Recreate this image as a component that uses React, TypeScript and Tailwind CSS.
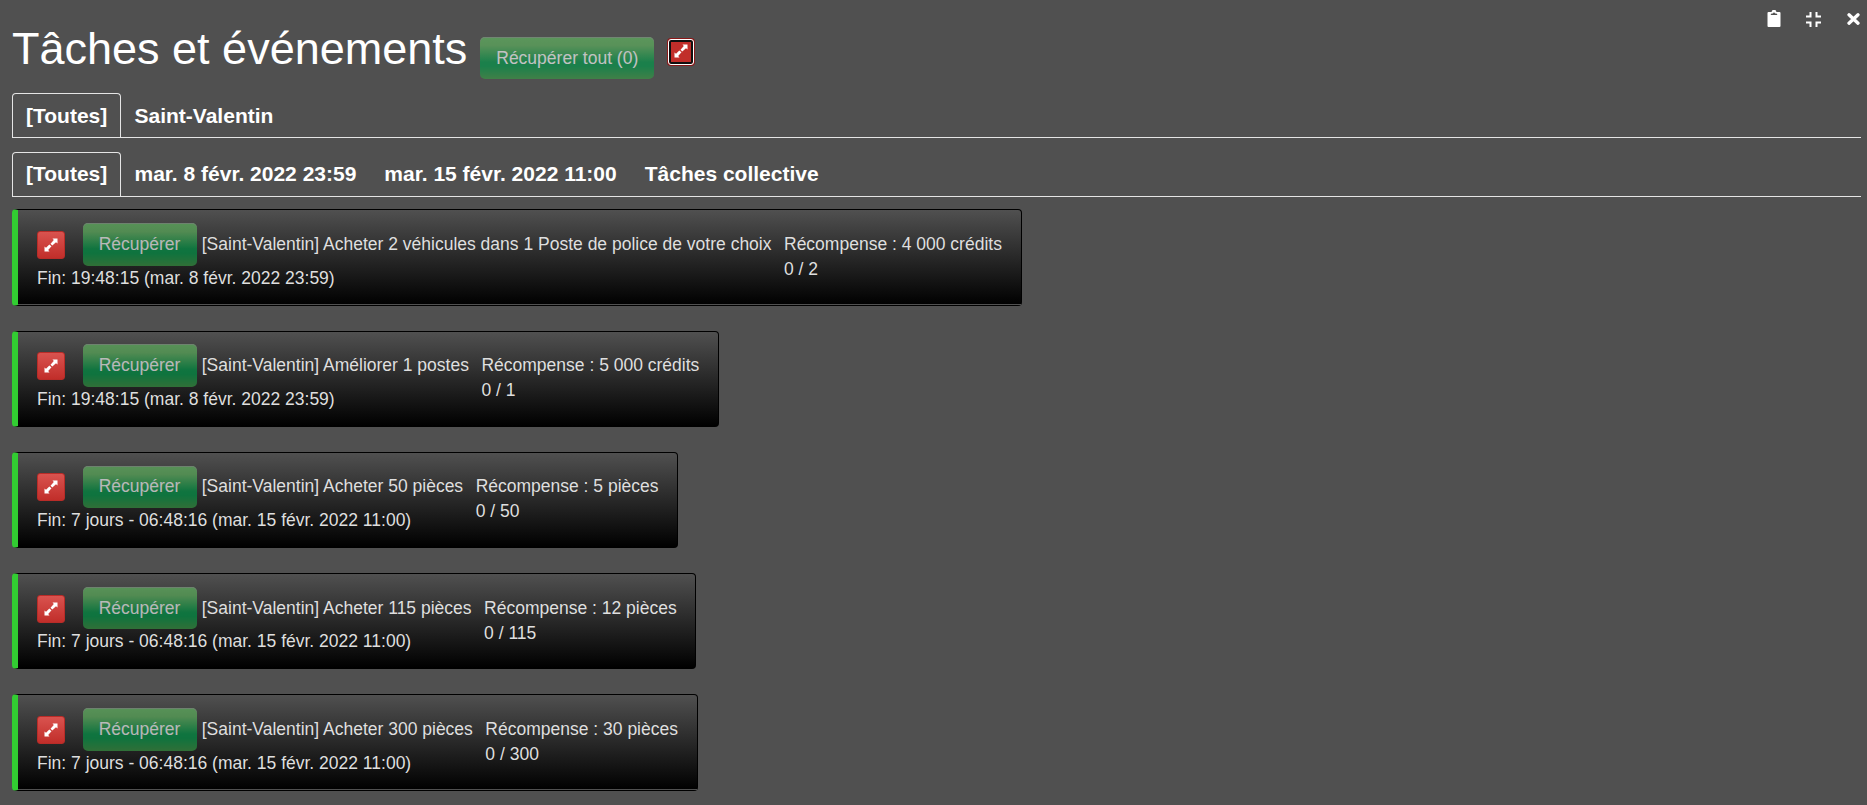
import React from "react";

type Task = { text: string; reward: string; progress: string; end: string; seam?: boolean };

const tasks: Task[] = [
  { text: "[Saint-Valentin] Acheter 2 véhicules dans 1 Poste de police de votre choix", reward: "Récompense : 4 000 crédits", progress: "0 / 2", end: "Fin: 19:48:15 (mar. 8 févr. 2022 23:59)", seam: true },
  { text: "[Saint-Valentin] Améliorer 1 postes", reward: "Récompense : 5 000 crédits", progress: "0 / 1", end: "Fin: 19:48:15 (mar. 8 févr. 2022 23:59)" },
  { text: "[Saint-Valentin] Acheter 50 pièces", reward: "Récompense : 5 pièces", progress: "0 / 50", end: "Fin: 7 jours - 06:48:16 (mar. 15 févr. 2022 11:00)" },
  { text: "[Saint-Valentin] Acheter 115 pièces", reward: "Récompense : 12 pièces", progress: "0 / 115", end: "Fin: 7 jours - 06:48:16 (mar. 15 févr. 2022 11:00)" },
  { text: "[Saint-Valentin] Acheter 300 pièces", reward: "Récompense : 30 pièces", progress: "0 / 300", end: "Fin: 7 jours - 06:48:16 (mar. 15 févr. 2022 11:00)", seam: true },
];

function ResizeIcon({ className = "" }: { className?: string }) {
  return (
    <svg className={className} width="14" height="14" viewBox="0 0 14 14" fill="#fff" aria-hidden="true">
      <path d="M8.500 0.500H13.500V5.500L12 4.200L8.300 7.500L6.500 5.700L9.800 2Z" />
      <path d="M0.500 8.500L2 9.800L5.300 6.500L7.500 8.300L4.200 12L5.500 13.500H0.500Z" />
      <path d="M5.600 5.600L8.400 8.400" stroke="#ce4340" strokeWidth="0.800" />
    </svg>
  );
}

function Tabs({ items, raised = false }: { items: string[]; raised?: boolean }) {
  const top = raised ? "pt-[8px]" : "pt-[9px]";
  return (
    <nav className="flex h-[45px] border-b border-[#e5e5e5] text-[21px] leading-[25px] font-bold text-white">
      {items.map((t, i) => (
        <a
          key={t}
          className={
            i === 0
              ? `h-[45px] w-[109px] rounded-t-[4px] border border-b-0 border-[#e5e5e5] pl-[13px] ${top}`
              : `border border-transparent pr-[13.500px] pl-[12.500px] whitespace-nowrap ${top}`
          }
        >
          {t}
        </a>
      ))}
    </nav>
  );
}

function TaskCard({ task }: { task: Task }) {
  return (
    <section className="relative flex h-[96.25px] w-fit rounded-[4px] border border-l-[6px] border-black border-l-[#32cd32] bg-[linear-gradient(#505050,#000)] pr-[18.75px] pl-[19px] text-[17.5px] leading-[25px] text-[#dfdfdf]">
      <div className="pt-[12.75px]">
        <div className="flex h-[42.5px] items-center">
          <button className="mt-[1px] mr-[18px] flex h-7 w-7 items-center justify-center rounded-[3px] border border-[#b92c28] bg-[linear-gradient(#d9534f,#c12e2a)]">
            <ResizeIcon />
          </button>
          <button className="mr-[4.75px] h-[42.5px] w-[114px] rounded-[5px] bg-[linear-gradient(#62bc62,#5eb55e_20%,#009a49_60%,#009a49_70%,#399a44)] pr-px text-white opacity-65 shadow-[inset_0_1px_0_#84a486]">
            Récupérer
          </button>
          <span className="whitespace-nowrap">{task.text}</span>
        </div>
        <div className="whitespace-nowrap">{task.end}</div>
      </div>
      <div className="pt-[21.5px] pl-[12.5px] whitespace-nowrap">
        <div>{task.reward}</div>
        <div>{task.progress}</div>
      </div>
      {task.seam && <i className="absolute right-0 bottom-0 left-0 h-px bg-[#505050]" />}
    </section>
  );
}

export default function App() {
  return (
    <div className="relative h-[805px] overflow-hidden bg-[#505050] pr-[6px] pl-3 font-['Liberation_Sans',Arial,sans-serif]">
      <div className="absolute top-[1px] right-0 flex h-9 items-center pr-[7px]">
        <svg className="mr-[25.5px]" width="14" height="18" viewBox="0 0 14 18" fill="#fff">
          <path fillRule="evenodd" d="M1.5 2H4L5 1.5A2 2 0 0 1 9 1.5L10 2H12.500A1 1 0 0 1 13.500 3V16A1 1 0 0 1 12.500 17H1.500A1 1 0 0 1 .5 16V3A1 1 0 0 1 1.500 2ZM3.500 5H10.500L9.500 3.500H8A1 1 0 0 0 6 3.500H4.500Z" />
        </svg>
        <svg className="mr-[26px]" width="15" height="15" viewBox="0 0 15 15" fill="none" stroke="#fff" strokeWidth="2">
          <path d="M0 4.500H4.500V0M10.500 0V4.500H15M15 10.500H10.500V15M4.500 15V10.500H0" />
        </svg>
        <svg width="13" height="12" viewBox="0 0 13 12" fill="none" stroke="#fff" strokeWidth="3.300" strokeLinecap="round">
          <path d="M2 1.800L11 10.200M11 1.800L2 10.200" />
        </svg>
      </div>
      <header className="flex h-[93px] items-start">
        <h1 className="pt-[23px] text-[45px] leading-[51px] whitespace-nowrap text-white">Tâches et événements</h1>
        <button className="mt-[37px] ml-[13px] h-[42px] w-[174px] rounded-[5px] bg-[linear-gradient(#62bc62,#5eb55e_20%,#009a49_60%,#009a49_70%,#399a44)] text-[17.5px] leading-[25px] text-white opacity-65 shadow-[inset_0_1px_0_#84a486]">
          Récupérer tout (0)
        </button>
        <button className="mt-[39px] ml-[14px] flex h-[26px] w-[26px] items-center justify-center rounded-[3px] border border-white bg-[#c12e2a] shadow-[inset_0_0_0_2px_#101010] ring-1 ring-[#8b1a1a]">
          <ResizeIcon className="mr-px mb-[3px]" />
        </button>
      </header>
      <Tabs items={["[Toutes]", "Saint-Valentin"]} />
      <div className="h-[14px]" />
      <Tabs raised items={["[Toutes]", "mar. 8 févr. 2022 23:59", "mar. 15 févr. 2022 11:00", "Tâches collective"]} />
      <main className="flex flex-col gap-[25px] pt-[12.45px]">
        {tasks.map((t) => (
          <TaskCard key={t.text} task={t} />
        ))}
      </main>
    </div>
  );
}
